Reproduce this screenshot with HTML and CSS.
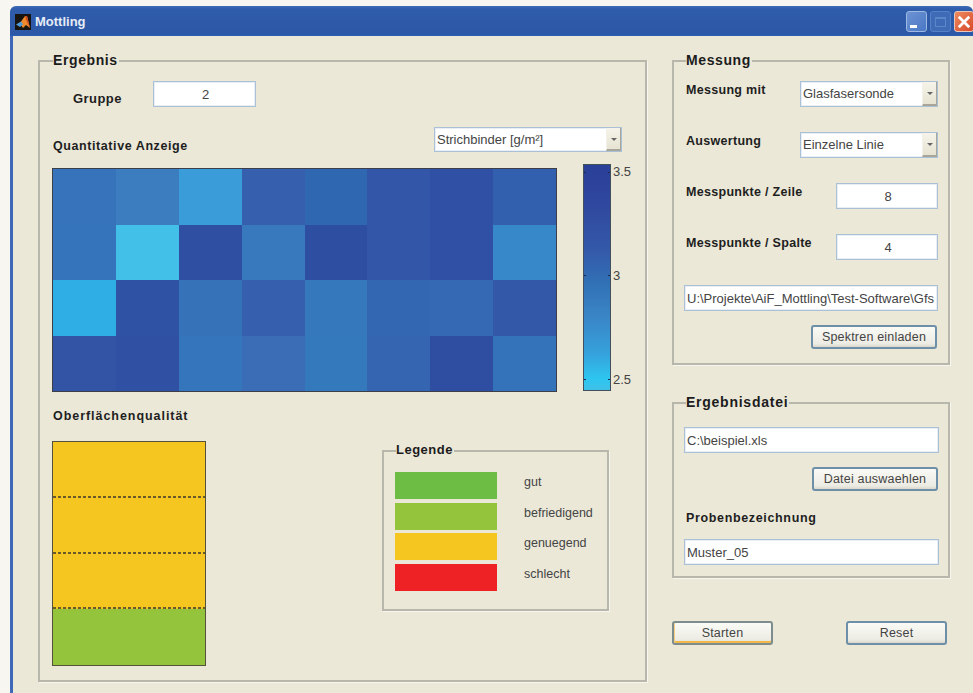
FILE: index.html
```html
<!DOCTYPE html>
<html lang="de">
<head>
<meta charset="utf-8">
<title>Mottling</title>
<link rel="stylesheet" href="styles.css">
</head>
<body>
<div class="window">
  <header class="titlebar">
    <svg class="app-icon" viewBox="0 0 16 16" width="16" height="16">
      <rect width="16" height="16" fill="#17130f"/>
      <path d="M5 9 L10 2 L12 2 L15 14 L11 11 L8 14 L6 11 Z" fill="#ef8a2c"/>
      <path d="M1 10.5 L6 7.5 L8 10.5 L5 13 Z" fill="#4f9bd8"/>
      <path d="M10 2 L12 2 L15 14 L11.5 7 Z" fill="#cf4a20"/>
    </svg>
    <span class="title-text">Mottling</span>
    <div class="caption-buttons">
      <span class="caption-btn min"><i></i></span>
      <span class="caption-btn max"><i></i></span>
      <span class="caption-btn close">
        <svg viewBox="0 0 12 12" width="14" height="14"><path d="M1.5 1.5 L10.5 10.5 M10.5 1.5 L1.5 10.5" stroke="#fff" stroke-width="2.4" fill="none"/></svg>
      </span>
    </div>
  </header>

  <main class="client">
    <section class="group result">
      <h2 class="group-title">Ergebnis</h2>

      <div class="group-row">
        <span class="label">Gruppe</span>
        <div class="field num">2</div>
      </div>

      <div class="measure-row">
        <span class="label">Quantitative Anzeige</span>
        <div class="select wide"><span class="select-text">Strichbinder [g/m²]</span><span class="arrow"></span></div>
      </div>

      <div class="chart-row">
        <div class="heatmap">
          <i style="background:#3773bb"></i><i style="background:#3c7dc0"></i><i style="background:#3a9cd8"></i><i style="background:#365fae"></i><i style="background:#2f68b0"></i><i style="background:#3356a8"></i><i style="background:#2f50a5"></i><i style="background:#3260ae"></i>
          <i style="background:#3574bb"></i><i style="background:#42c0e8"></i><i style="background:#2f4fa3"></i><i style="background:#3878bd"></i><i style="background:#2e4ea2"></i><i style="background:#3356a8"></i><i style="background:#2f50a5"></i><i style="background:#3788c8"></i>
          <i style="background:#2faee6"></i><i style="background:#3052a5"></i><i style="background:#3672b8"></i><i style="background:#365fae"></i><i style="background:#3579bc"></i><i style="background:#3467b2"></i><i style="background:#3669b3"></i><i style="background:#3358a8"></i>
          <i style="background:#3354a5"></i><i style="background:#2f50a3"></i><i style="background:#3575bb"></i><i style="background:#3b6cb6"></i><i style="background:#3579bd"></i><i style="background:#3565b0"></i><i style="background:#2f4ea2"></i><i style="background:#3473b9"></i>
        </div>
        <div class="colorbar"></div>
        <div class="scale"><span>3.5</span><span>3</span><span>2.5</span></div>
      </div>

      <div class="quality-row">
        <div class="quality">
          <span class="label quality-label">Oberflächenqualität</span>
          <div class="quality-bar">
            <i class="yellow"></i><i class="yellow"></i><i class="yellow"></i><i class="green"></i>
          </div>
        </div>
        <section class="group legend">
          <h3 class="group-title small">Legende</h3>
          <div class="legend-grid">
            <i class="swatch s-good"></i><span class="legend-text">gut</span>
            <i class="swatch s-fair"></i><span class="legend-text">befriedigend</span>
            <i class="swatch s-ok"></i><span class="legend-text">genuegend</span>
            <i class="swatch s-bad"></i><span class="legend-text">schlecht</span>
          </div>
        </section>
      </div>
    </section>

    <aside class="side">
      <section class="group measure">
        <h2 class="group-title">Messung</h2>
        <div class="form-rows">
          <div class="form-row"><span class="label">Messung mit</span><div class="select"><span class="select-text">Glasfasersonde</span><span class="arrow"></span></div></div>
          <div class="form-row"><span class="label">Auswertung</span><div class="select"><span class="select-text">Einzelne Linie</span><span class="arrow"></span></div></div>
          <div class="form-row"><span class="label">Messpunkte / Zeile</span><div class="field num short">8</div></div>
          <div class="form-row"><span class="label">Messpunkte / Spalte</span><div class="field num short">4</div></div>
          <div class="field path">U:\Projekte\AiF_Mottling\Test-Software\Gfs</div>
        </div>
        <button class="btn load" type="button">Spektren einladen</button>
      </section>

      <section class="group output">
        <h2 class="group-title">Ergebnisdatei</h2>
        <div class="field full">C:\beispiel.xls</div>
        <button class="btn pick" type="button">Datei auswaehlen</button>
        <span class="label sample">Probenbezeichnung</span>
        <div class="field full">Muster_05</div>
      </section>

      <div class="actions">
        <button class="btn action default" type="button">Starten</button>
        <button class="btn action" type="button">Reset</button>
      </div>
    </aside>
  </main>
</div>
</body>
</html>
```

FILE: styles.css
```css
* { box-sizing: border-box; }

html, body { margin: 0; height: 100%; }

body {
  padding: 6px 0 0 10px;
  background: #f7f6f1;
  overflow: hidden;
  font-family: "Liberation Sans", Arial, sans-serif;
  font-size: 12px;
  color: #3c3c3c;
}

/* Window frame */
.window {
  width: 963px;
  height: 687px;
  display: flex;
  flex-direction: column;
  border-radius: 6px 6px 0 0;
  overflow: hidden;
  background: #ebe8d8;
}

.titlebar {
  flex: 0 0 30px;
  display: flex;
  align-items: center;
  padding: 2px 0 0 5px;
  background: linear-gradient(#3f6cb8 0, #2f5cab 3px, #2c58a6 26px, #2a58a8 100%);
  border-bottom: 1px solid #2c5fb4;
}

.app-icon { flex: none; }

.title-text {
  margin-left: 4px;
  font-size: 13px;
  font-weight: bold;
  color: #e6ecf7;
}

.caption-buttons {
  margin-left: auto;
  display: flex;
  gap: 3px;
}

.caption-btn {
  width: 21px;
  height: 21px;
  display: flex;
  align-items: center;
  justify-content: center;
  border-radius: 3px;
  border: 1px solid #9db8e2;
}

.caption-btn.min { background: linear-gradient(135deg, #6d93d2, #4a78c6); }
.caption-btn.min i { width: 7px; height: 3px; margin: 9px 6px 0 0; background: #fff; }
.caption-btn.max { background: #3e6ab6; border-color: #5480c6; }
.caption-btn.max i { width: 11px; height: 10px; border: 1px solid #5a86ca; border-top-width: 2px; }
.caption-btn.close {
  width: 20px;
  margin-right: -1px;
  background: linear-gradient(135deg, #ee8a5f, #d8492a);
  border-color: #e9c7b8;
}

/* Client area */
.client {
  flex: 1;
  display: grid;
  grid-template-columns: 609px 278px;
  column-gap: 25px;
  align-content: start;
  padding: 24px 0 0 25px;
  border-left: 3px solid #3f68b8;
}

.group {
  border: 2px solid #b8b7ab;
  box-shadow: 1px 1px 0 #f6f5ee;
}

.group-title {
  width: fit-content;
  height: 16px;
  margin: -10px 0 0;
  padding: 0 1px 0 0;
  background: #ebe8d8;
  font-size: 14px;
  line-height: 16px;
  font-weight: bold;
  letter-spacing: .6px;
  color: #1c1c1c;
}

.result > .group-title { margin-left: 1px; }

.group-title.small { font-size: 13px; margin-left: 12px; letter-spacing: .5px; }

.label {
  font-size: 12.5px;
  font-weight: bold;
  letter-spacing: .3px;
  line-height: 16px;
  color: #1e1e1e;
  white-space: nowrap;
}

.field, .select {
  height: 26px;
  display: flex;
  align-items: center;
  background: #fff;
  border: 1px solid #a9c0d6;
  box-shadow: inset 0 0 0 1px #e8eef4;
  font-size: 13px;
  color: #444;
  white-space: nowrap;
  overflow: hidden;
}

.field { padding-left: 2px; }
.field.num { justify-content: center; width: 103px; }
.field.short { width: 102px; }

.select { width: 138px; padding-left: 2px; }
.select.wide { width: 188px; height: 25px; }
.select-text { flex: 1; padding-bottom: 1px; }

.arrow {
  width: 15px;
  height: 100%;
  flex: none;
  position: relative;
  background: linear-gradient(#f6f4ea, #e6e3d2);
  border-left: 1px solid #f4f2e8;
  border-right: 1px solid #a8a69a;
  border-bottom: 2px solid #a8a69a;
}

.arrow::after {
  content: "";
  position: absolute;
  left: 4px;
  top: 10px;
  border: 3px solid transparent;
  border-top: 3px solid #666;
  border-bottom: 0;
}

/* Left panel */
.result {
  height: 622px;
  padding: 0 0 0 12px;
}

.group-row {
  display: flex;
  align-items: center;
  margin-top: 13px;
  padding-left: 21px;
}

.group-row .label { width: 80px; padding-top: 10px; font-size: 13px; letter-spacing: .45px; }

.measure-row {
  display: flex;
  justify-content: space-between;
  height: 25px;
  margin-top: 20px;
  padding-right: 23px;
}

.measure-row .label { padding: 11px 0 0 1px; font-size: 12.5px; letter-spacing: .58px; }

.chart-row {
  display: flex;
  margin-top: 12px;
  height: 228px;
}

.heatmap {
  width: 505px;
  height: 224px;
  margin-top: 4px;
  display: grid;
  grid-template-columns: repeat(8, 1fr);
  grid-template-rows: repeat(4, 1fr);
  border: 1px solid #3c3f48;
}

.heatmap i { display: block; }

/* Ticks run along both inner edges of the scale bar */
.colorbar {
  width: 28px;
  height: 227px;
  margin-left: 26px;
  border: 1px solid #41505a;
  background:
    linear-gradient(#1d2b50, #1d2b50) left 0 top 7px / 2px 1px no-repeat,
    linear-gradient(#1d2b50, #1d2b50) right 0 top 7px / 2px 1px no-repeat,
    linear-gradient(#1d2b50, #1d2b50) left 0 top 110px / 2px 1px no-repeat,
    linear-gradient(#1d2b50, #1d2b50) right 0 top 110px / 2px 1px no-repeat,
    linear-gradient(#1d2b50, #1d2b50) left 0 top 214px / 2px 1px no-repeat,
    linear-gradient(#1d2b50, #1d2b50) right 0 top 214px / 2px 1px no-repeat,
    linear-gradient(#2a3f98 0, #30489f 18%, #3459a9 38%, #3170b5 52%, #3a86c6 68%, #35a2dc 84%, #2dc6f0 95%, #3fc0e8 100%);
}

.scale {
  height: 222px;
  margin: 1px 0 0 2px;
  display: flex;
  flex-direction: column;
  justify-content: space-between;
  font-size: 13px;
  line-height: 14px;
  color: #444;
}

.quality-row {
  display: flex;
  margin-top: 16px;
}

.quality { width: 330px; }
.quality-label { display: block; padding-left: 1px; letter-spacing: .95px; }

.quality-bar {
  width: 154px;
  height: 225px;
  margin-top: 17px;
  display: grid;
  grid-template-rows: repeat(4, 1fr);
  border: 1px solid #54513c;
}

.quality-bar i { display: block; }
.quality-bar .yellow {
  background:
    repeating-linear-gradient(90deg, #6a5a28 0 3px, transparent 3px 5px) left bottom / 100% 2px no-repeat,
    #f4c61f;
}
.quality-bar .green { background: #94c33c; }

.legend {
  width: 227px;
  height: 161px;
  margin-top: 42px;
}

.legend-grid {
  display: grid;
  grid-template-columns: 102px auto;
  grid-auto-rows: 27px;
  row-gap: 3.5px;
  column-gap: 27px;
  margin: 14px 0 0 11px;
}

.swatch { display: block; }
.s-good { background: #6dbd45; }
.s-fair { background: #94c33c; }
.s-ok { background: #f4c61f; }
.s-bad { background: #ee2125; }

.legend-text {
  font-size: 12.5px;
  line-height: 20px;
  color: #444;
}

/* Right panel */
.measure {
  height: 305px;
  padding: 0 10px 0 12px;
}

.form-rows {
  display: grid;
  row-gap: 25px;
  margin-top: 13px;
}

.form-row {
  display: flex;
  justify-content: space-between;
  align-items: flex-start;
}

.form-row .label { padding-top: 1px; }

.path { width: 254px; margin-left: -2px; }

.btn {
  display: block;
  height: 24px;
  padding: 0;
  border: 2px solid #6d8fa8;
  border-radius: 3px;
  background: linear-gradient(#fafaf6, #ecebe3 85%, #d9d7cb);
  font: 12.5px/18px "Liberation Sans", Arial, sans-serif;
  letter-spacing: .2px;
  color: #444;
}

.load, .pick { width: 126px; margin: 14px 1px 0 auto; }

.output {
  height: 176px;
  margin-top: 37px;
  padding: 0 9px 0 10px;
}

.output .group-title { margin-left: 2px; letter-spacing: .75px; }
.output .group-title + .field { margin-top: 17px; }

.full { width: 255px; }

.sample { display: block; margin: 19px 0 13px 2px; letter-spacing: .65px; }

.actions {
  display: flex;
  justify-content: space-between;
  margin-top: 43px;
  padding-right: 3px;
}

.action { width: 101px; }
.action.default { border-color: #7d8d8d; box-shadow: inset 1px 0 0 #f6cf80, inset 0 -2px 0 #f2b84a; }
```
